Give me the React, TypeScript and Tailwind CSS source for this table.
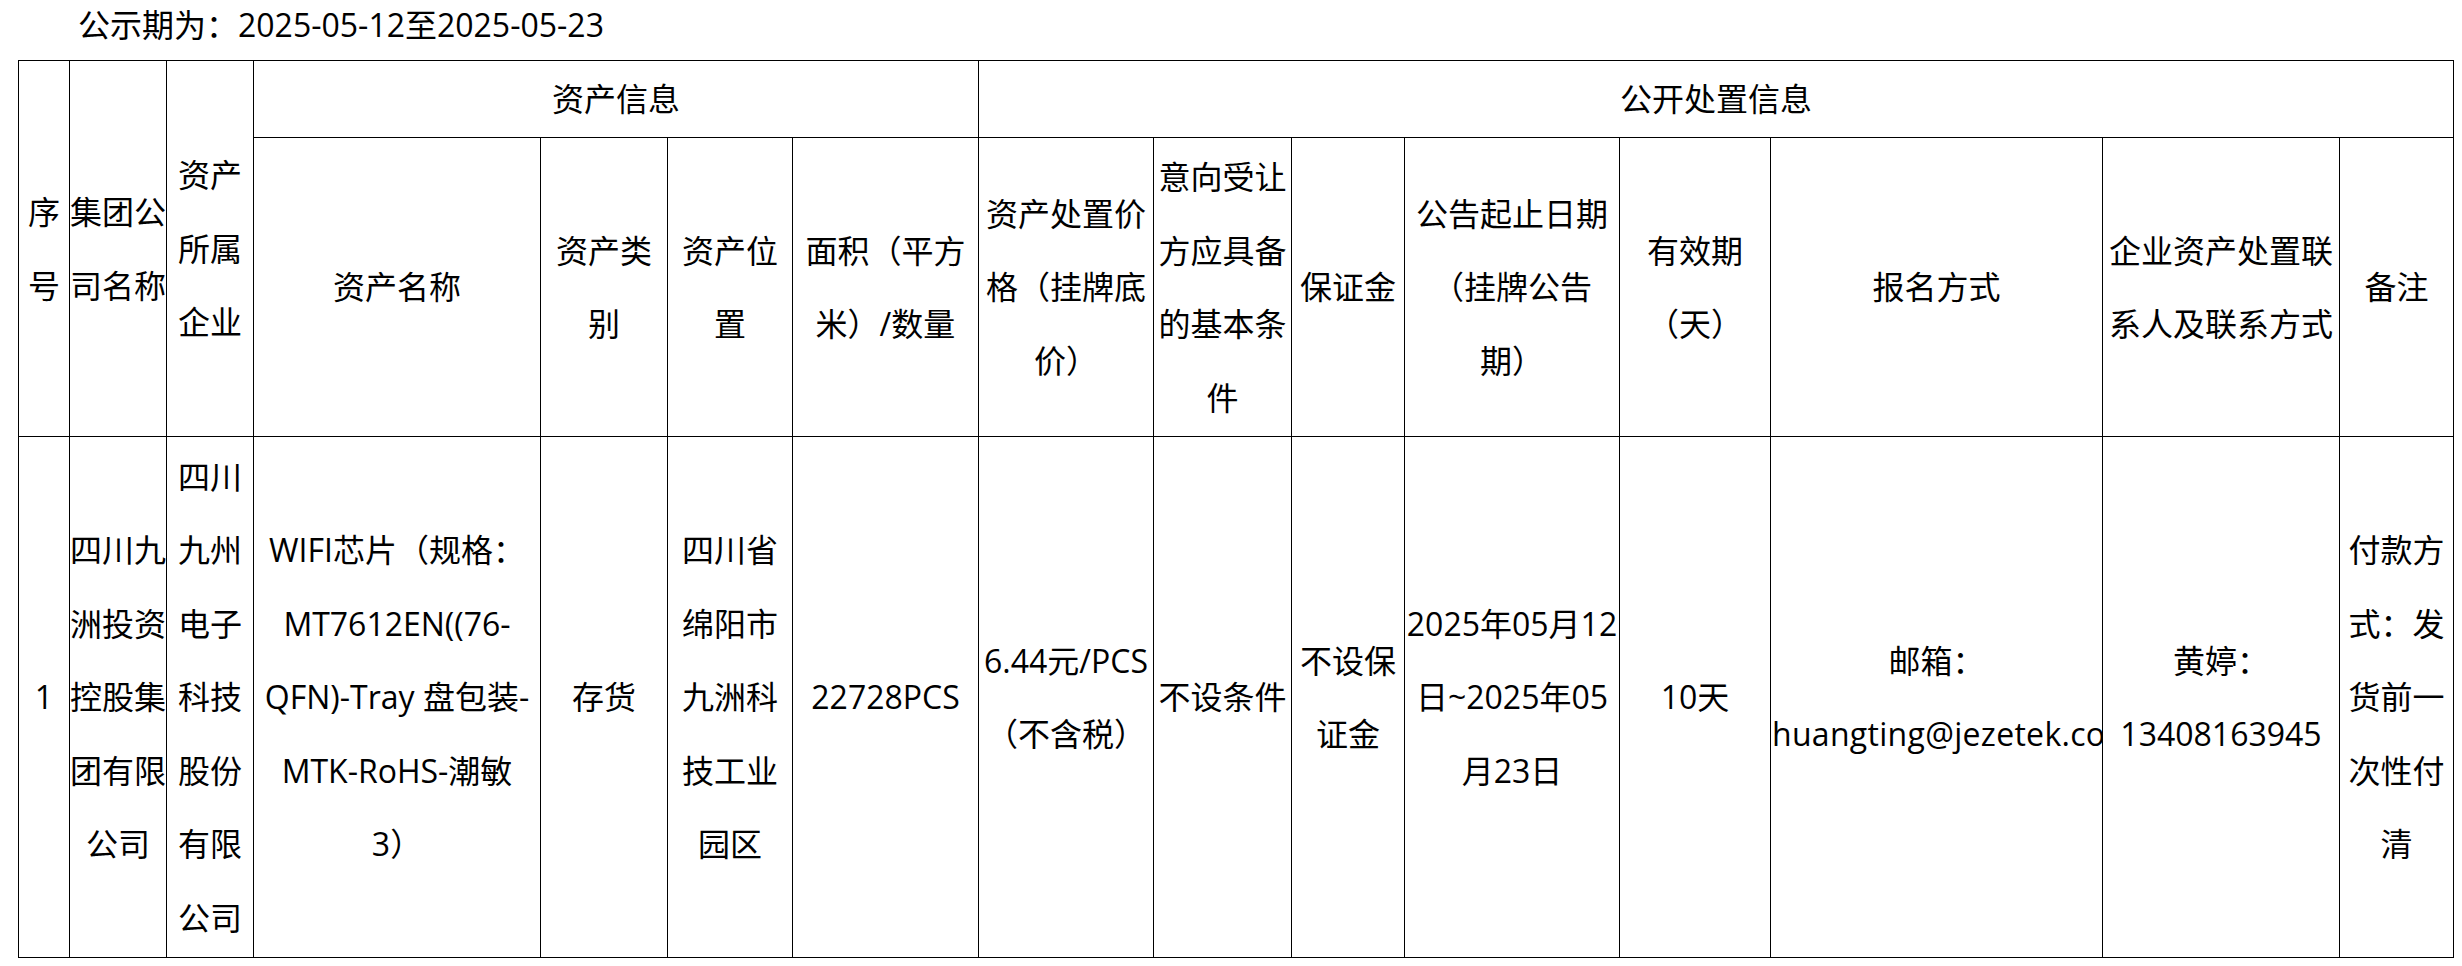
import React from "react";

const cellBase =
  "bg-white flex items-center justify-center text-center whitespace-nowrap overflow-hidden";

function Lines({ lines }: { lines: string[] }) {
  return (
    <div>
      {lines.map((l, i) => (
        <div key={i}>{l}</div>
      ))}
    </div>
  );
}

function Cell({ lines, className = "" }: { lines: string[]; className?: string }) {
  return (
    <div className={`${cellBase} ${className}`}>
      <Lines lines={lines} />
    </div>
  );
}

export default function App() {
  return (
    <div className="w-[2462px] h-[966px] bg-white text-black font-['Open_Sans','Noto_Sans_CJK_SC',sans-serif] text-[32px] overflow-hidden">
      <div className="h-[60px] pl-[78px] leading-[50px] whitespace-nowrap">
        公示期为：2025-05-12至2025-05-23
      </div>
      <div className="ml-[18px] w-max grid bg-black p-px gap-px leading-[73.5px] grid-cols-[50px_96px_86px_286px_126px_124px_185px_174px_137px_112px_214px_150px_331px_236px_113px] grid-rows-[76px_298px_520px]">
        {/* header row 1 */}
        <Cell className="row-span-2" lines={["序", "号"]} />
        <Cell className="row-span-2" lines={["集团公", "司名称"]} />
        <Cell className="row-span-2" lines={["资产", "所属", "企业"]} />
        <Cell className="col-span-4" lines={["资产信息"]} />
        <Cell className="col-span-8" lines={["公开处置信息"]} />
        {/* header row 2 */}
        <Cell lines={["资产名称"]} />
        <Cell lines={["资产类", "别"]} />
        <Cell lines={["资产位", "置"]} />
        <Cell lines={["面积（平方", "米）/数量"]} />
        <Cell lines={["资产处置价", "格（挂牌底", "价）"]} />
        <Cell lines={["意向受让", "方应具备", "的基本条", "件"]} />
        <Cell lines={["保证金"]} />
        <Cell lines={["公告起止日期", "（挂牌公告", "期）"]} />
        <Cell lines={["有效期", "（天）"]} />
        <Cell lines={["报名方式"]} />
        <Cell lines={["企业资产处置联", "系人及联系方式"]} />
        <Cell lines={["备注"]} />
        {/* data row */}
        <Cell lines={["1"]} />
        <Cell lines={["四川九", "洲投资", "控股集", "团有限", "公司"]} />
        <Cell lines={["四川", "九州", "电子", "科技", "股份", "有限", "公司"]} />
        <Cell
          lines={[
            "WIFI芯片（规格：",
            "MT7612EN((76-",
            "QFN)-Tray 盘包装-",
            "MTK-RoHS-潮敏",
            "3）",
          ]}
        />
        <Cell lines={["存货"]} />
        <Cell lines={["四川省", "绵阳市", "九洲科", "技工业", "园区"]} />
        <Cell lines={["22728PCS"]} />
        <Cell lines={["6.44元/PCS", "（不含税）"]} />
        <Cell lines={["不设条件"]} />
        <Cell lines={["不设保", "证金"]} />
        <Cell lines={["2025年05月12", "日~2025年05", "月23日"]} />
        <Cell lines={["10天"]} />
        <div className={cellBase}>
          <div className="w-full">
            <div className="text-center">邮箱：</div>
            <div className="text-left pl-px tracking-[0.3px]">huangting@jezetek.com</div>
          </div>
        </div>
        <Cell lines={["黄婷：", "13408163945"]} />
        <Cell lines={["付款方", "式：发", "货前一", "次性付", "清"]} />
      </div>
    </div>
  );
}
